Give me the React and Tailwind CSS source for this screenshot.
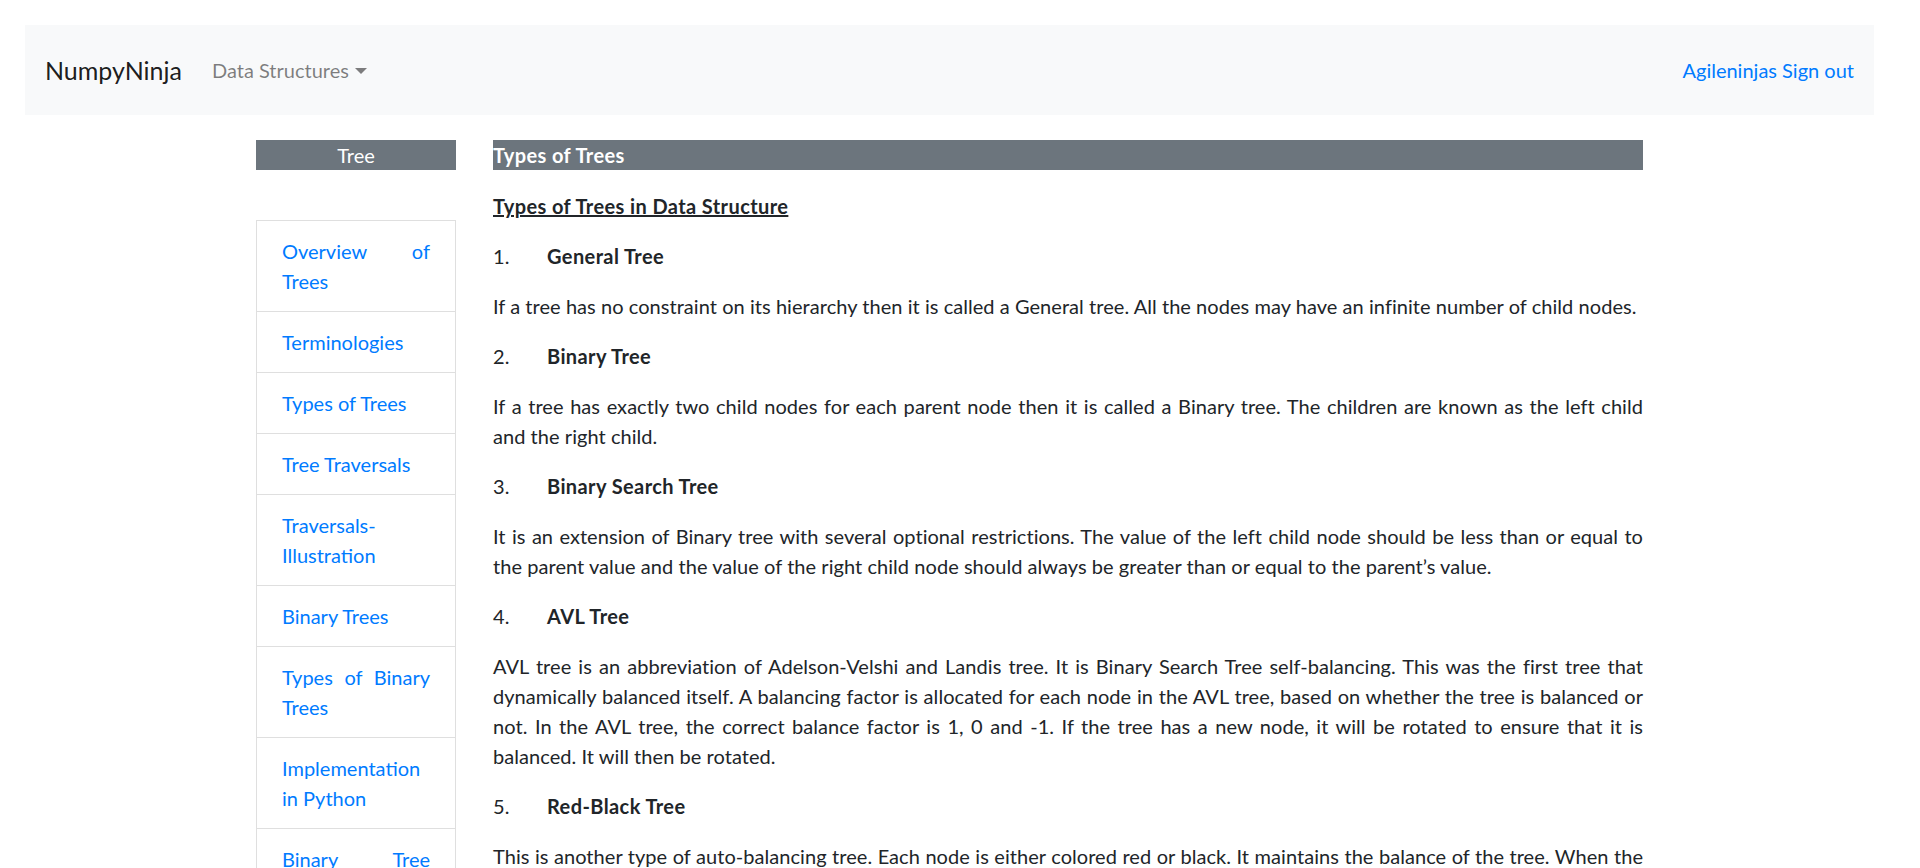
import React from 'react';

const topics = [
  'Overview of Trees',
  'Terminologies',
  'Types of Trees',
  'Tree Traversals',
  'Traversals-Illustration',
  'Binary Trees',
  'Types of Binary Trees',
  'Implementation in Python',
  'Binary Tree Traversals',
  'Implementation of Binary Trees',
  'Applications of Binary trees',
  'Binary Search Trees',
  'Implementation Of BST',
];

const sections = [
  {
    title: 'General Tree',
    text: 'If a tree has no constraint on its hierarchy then it is called a General tree. All the nodes may have an infinite number of child nodes.',
  },
  {
    title: 'Binary Tree',
    text: 'If a tree has exactly two child nodes for each parent node then it is called a Binary tree. The children are known as the left child and the right child.',
  },
  {
    title: 'Binary Search Tree',
    text: 'It is an extension of Binary tree with several optional restrictions. The value of the left child node should be less than or equal to the parent value and the value of the right child node should always be greater than or equal to the parent\u2019s value.',
  },
  {
    title: 'AVL Tree',
    text: 'AVL tree is an abbreviation of Adelson-Velshi and Landis tree. It is Binary Search Tree self-balancing. This was the first tree that dynamically balanced itself. A balancing factor is allocated for each node in the AVL tree, based on whether the tree is balanced or not. In the AVL tree, the correct balance factor is 1, 0 and -1. If the tree has a new node, it will be rotated to ensure that it is balanced. It will then be rotated.',
  },
  {
    title: 'Red-Black Tree',
    text: 'This is another type of auto-balancing tree. Each node is either colored red or black. It maintains the balance of the tree. When the tree is modified, the new tree is rearranged and repainted to restore the coloring properties that constrain how unbalanced the tree can become.',
  },
  {
    title: 'N-ary Tree',
    text: 'In this type of tree with a node, N is the maximum number of children. A binary tree is a two-year tree, as at most 2 children in every binary tree node. A full N-ary tree is a tree that has 0 or N children.',
  },
];

const App = () => {
  return (
    <div className="min-h-[1420px] bg-white pt-[25px] font-['Lato',sans-serif] text-[20px] leading-[30px] text-[#212529]">
      {/* Navbar */}
      <nav className="ml-[25px] flex h-[90px] w-[1849px] items-center justify-between bg-[#f8f9fa] px-[20px]">
        <div className="flex items-center">
          <span className="mr-[20px] text-[25px] leading-[38px] text-black/90">NumpyNinja</span>
          <span className="flex items-center px-[10px] text-black/50">
            Data Structures
            <span className="ml-[6px] mt-[2px] h-0 w-0 border-x-[6px] border-t-[6px] border-x-transparent border-t-black/50" />
          </span>
        </div>
        <a className="text-[#007bff]">Agileninjas Sign out</a>
      </nav>

      <div className="mt-[25px] flex pl-[256px]">
        {/* Sidebar */}
        <aside className="w-[200px] shrink-0">
          <div className="h-[30px] bg-[#6c757d] text-center text-white">Tree</div>
          <ul className="mt-[50px] flex flex-col">
            {topics.map((t, i) => (
              <li
                key={t}
                className={`border border-black/[0.125] bg-white px-[25px] py-[15px] text-justify text-[#007bff] ${i > 0 ? '-mt-px' : ''}`}
              >
                {t}
              </li>
            ))}
          </ul>
        </aside>

        {/* Content */}
        <main className="ml-[37px] w-[1150px] tracking-[0.05px]">
          <div className="h-[30px] bg-[#6c757d] font-bold tracking-[0.4px] text-white">Types of Trees</div>
          <p className="mt-[21px] mb-[20px] font-bold tracking-[0.4px] underline">Types of Trees in Data Structure</p>
          {sections.map((s, i) => (
            <div key={s.title}>
              <p className="mb-[20px] flex">
                <span className="w-[54px] shrink-0">{i + 1}.</span>
                <span className="font-bold tracking-[0.4px]">{s.title}</span>
              </p>
              <p className="mb-[20px] text-justify">{s.text}</p>
            </div>
          ))}
          <button className="mt-[5px] rounded-[5px] bg-[#007bff] px-[15px] py-[7px] text-white">Try here&gt;&gt;&gt;</button>
          <p className="mt-[40px] text-[#007bff]">Practice Questions</p>
        </main>
      </div>
    </div>
  );
};

export default App;
